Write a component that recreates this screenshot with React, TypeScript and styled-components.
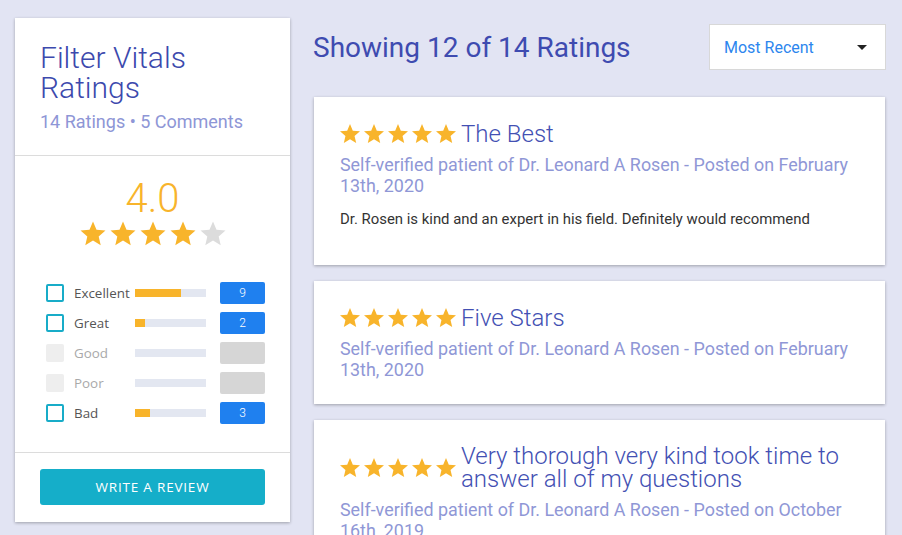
import styled, { createGlobalStyle } from 'styled-components';

const GlobalStyle = createGlobalStyle`
  html, body {
    margin: 0;
    padding: 0;
    background: #e2e4f3;
    overflow: hidden;
  }
  * {
    box-sizing: border-box;
  }
  body {
    font-family: Roboto, 'Liberation Sans', sans-serif;
  }
`;

const STAR_PATH =
  'M12 17.27L18.18 21l-1.64-7.03L22 9.24l-7.19-.61L12 2 9.19 8.63 2 9.24l5.46 4.73L5.82 21z';

const Star = ({ size, on }: { size: number; on: boolean }) => (
  <svg width={size} height={size} viewBox="0 0 24 24">
    <path d={STAR_PATH} fill={on ? '#f8b42b' : '#dcdcdc'} />
  </svg>
);

const Page = styled.div`
  display: flex;
  align-items: flex-start;
  gap: 24px;
  padding: 18px 17px 0 15px;
`;

const Sidebar = styled.aside`
  width: 275px;
  flex-shrink: 0;
  background: #fff;
  box-shadow: 0 1px 3px rgba(0, 0, 0, 0.3);
`;

const SideHeader = styled.div`
  padding: 25px 25px 22px;
  border-bottom: 1px solid #dcdcdc;
`;

const SideTitle = styled.h2`
  margin: 0;
  font-size: 30px;
  line-height: 30px;
  font-weight: 300;
  color: #3c49ad;
`;

const SideSub = styled.div`
  margin-top: 8px;
  font-size: 18px;
  line-height: 22px;
  color: #8e96d6;
`;

const Summary = styled.div`
  padding: 21px 25px 24px 31px;
`;

const Score = styled.div`
  text-align: center;
  margin-left: -6px;
  font-size: 40px;
  line-height: 44px;
  font-weight: 300;
  color: #f8b42b;
`;

const BigStars = styled.div`
  display: flex;
  justify-content: center;
  margin: -2px 0 29px -6px;
  height: 30px;
`;

const FilterRow = styled.div`
  display: flex;
  align-items: center;
  height: 30px;
`;

const Check = styled.span<{ $disabled?: boolean }>`
  width: 18px;
  height: 18px;
  border-radius: 2px;
  flex-shrink: 0;
  border: ${(p) => (p.$disabled ? 'none' : '2px solid #18acc8')};
  background: ${(p) => (p.$disabled ? '#eeeeee' : '#fff')};
`;

const Label = styled.span<{ $disabled?: boolean }>`
  width: 61px;
  margin-left: 10px;
  font-family: 'Open Sans', 'Liberation Sans', sans-serif;
  font-size: 13.4px;
  color: ${(p) => (p.$disabled ? '#a9a9a9' : '#555')};
`;

const Bar = styled.div`
  width: 71px;
  height: 8px;
  background: #e3e7f1;
`;

const BarFill = styled.div`
  height: 100%;
  background: #f8b42b;
`;

const Count = styled.span<{ $disabled?: boolean }>`
  width: 45px;
  height: 22px;
  margin-left: 14px;
  border-radius: 2px;
  background: ${(p) => (p.$disabled ? '#d6d6d6' : '#1f80ef')};
  color: #fff;
  font-size: 12px;
  font-weight: 300;
  display: flex;
  align-items: center;
  justify-content: center;
`;

const SideFooter = styled.div`
  border-top: 1px solid #dcdcdc;
  padding: 16px 25px 17px;
`;

const WriteButton = styled.button`
  width: 100%;
  height: 36px;
  border: none;
  border-radius: 3px;
  background: #15aec9;
  color: #fff;
  font-family: 'Open Sans', 'Liberation Sans', sans-serif;
  font-size: 13.5px;
  letter-spacing: 0.8px;
  cursor: pointer;
`;

const Main = styled.main`
  width: 571px;
  flex-shrink: 0;
`;

const TopBar = styled.div`
  display: flex;
  align-items: center;
  justify-content: space-between;
  margin: 6px 0 27px;
  height: 46px;
`;

const Heading = styled.h1`
  margin: 0 0 0 -1px;
  font-size: 28px;
  font-weight: 400;
  color: #3e4bb0;
`;

const Sort = styled.div`
  width: 177px;
  height: 46px;
  margin-right: -1px;
  background: #fff;
  border: 1px solid #d8d8d8;
  display: flex;
  align-items: center;
  justify-content: space-between;
  padding: 0 18px 0 14px;
  font-size: 16px;
  color: #2c86ee;
`;

const Caret = styled.span`
  width: 0;
  height: 0;
  border-left: 5px solid transparent;
  border-right: 5px solid transparent;
  border-top: 5px solid #222;
`;

const Card = styled.article`
  background: #fff;
  box-shadow: 0 1px 3px rgba(0, 0, 0, 0.3);
  padding: 25px 26px 24px;
  margin-bottom: 16px;
`;

const CardHead = styled.div`
  display: flex;
  align-items: center;
`;

const CardStars = styled.div`
  display: flex;
  flex-shrink: 0;
  margin-left: -2px;
  margin-right: 3px;
`;

const CardTitle = styled.h3`
  margin: 0;
  font-size: 24px;
  line-height: 23px;
  font-weight: 300;
  color: #4350b3;
`;

const Meta = styled.div`
  margin-top: 8px;
  font-size: 17.9px;
  line-height: 21px;
  color: #8f97d6;
`;

const Body = styled.p`
  margin: 13px 0 12px;
  font-size: 14.9px;
  line-height: 20px;
  color: #333;
`;

const filters = [
  { label: 'Excellent', count: 9 },
  { label: 'Great', count: 2 },
  { label: 'Good', count: 0 },
  { label: 'Poor', count: 0 },
  { label: 'Bad', count: 3 },
];

const reviews = [
  {
    title: 'The Best',
    meta: 'Self-verified patient of Dr. Leonard A Rosen - Posted on February 13th, 2020',
    body: 'Dr. Rosen is kind and an expert in his field. Definitely would recommend',
  },
  {
    title: 'Five Stars',
    meta: 'Self-verified patient of Dr. Leonard A Rosen - Posted on February 13th, 2020',
  },
  {
    title: 'Very thorough very kind took time to answer all of my questions',
    meta: 'Self-verified patient of Dr. Leonard A Rosen - Posted on October 16th, 2019',
  },
];

export default function App() {
  const total = 14;
  return (
    <>
      <GlobalStyle />
      <Page>
        <Sidebar>
          <SideHeader>
            <SideTitle>Filter Vitals Ratings</SideTitle>
            <SideSub>14 Ratings • 5 Comments</SideSub>
          </SideHeader>
          <Summary>
            <Score>4.0</Score>
            <BigStars>
              {[1, 2, 3, 4, 5].map((i) => (
                <Star key={i} size={30} on={i <= 4} />
              ))}
            </BigStars>
            {filters.map((f) => {
              const off = f.count === 0;
              return (
                <FilterRow key={f.label}>
                  <Check $disabled={off} />
                  <Label $disabled={off}>{f.label}</Label>
                  <Bar>
                    <BarFill style={{ width: `${(f.count / total) * 100}%` }} />
                  </Bar>
                  <Count $disabled={off}>{off ? '' : f.count}</Count>
                </FilterRow>
              );
            })}
          </Summary>
          <SideFooter>
            <WriteButton>WRITE A REVIEW</WriteButton>
          </SideFooter>
        </Sidebar>
        <Main>
          <TopBar>
            <Heading>Showing 12 of 14 Ratings</Heading>
            <Sort>
              Most Recent
              <Caret />
            </Sort>
          </TopBar>
          {reviews.map((r) => (
            <Card key={r.title}>
              <CardHead>
                <CardStars>
                  {[1, 2, 3, 4, 5].map((i) => (
                    <Star key={i} size={24} on />
                  ))}
                </CardStars>
                <CardTitle>{r.title}</CardTitle>
              </CardHead>
              <Meta>{r.meta}</Meta>
              {r.body && <Body>{r.body}</Body>}
            </Card>
          ))}
        </Main>
      </Page>
    </>
  );
}
